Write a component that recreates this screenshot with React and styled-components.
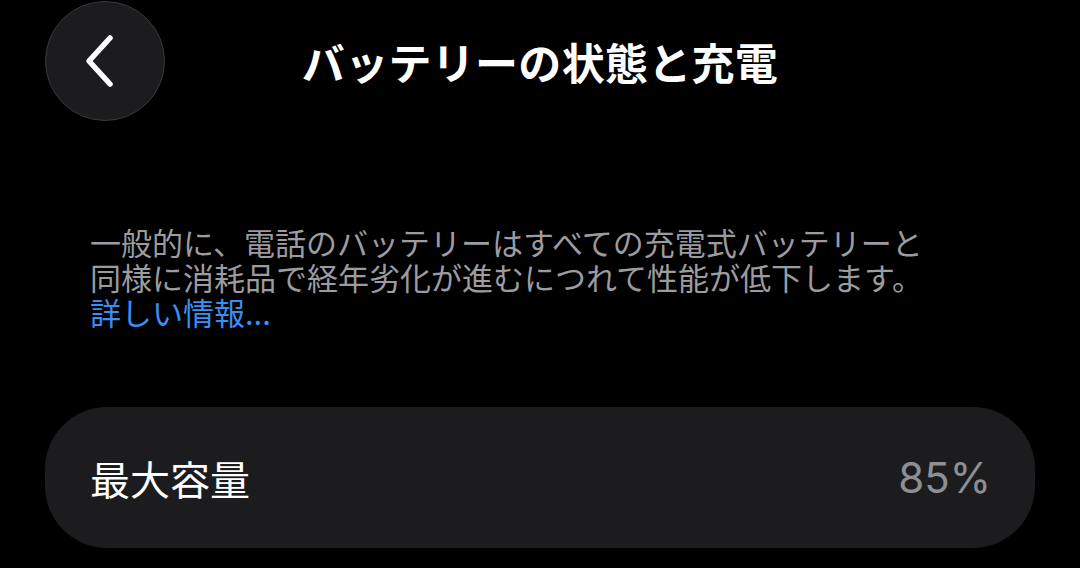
import React from 'react';
import styled, { createGlobalStyle } from 'styled-components';

const GlobalStyle = createGlobalStyle`
  html, body {
    margin: 0;
    padding: 0;
    background: #000;
  }
  body {
    font-family: "Noto Sans CJK JP", "Noto Sans", sans-serif;
    color: #fff;
  }
`;

const Page = styled.div`
  width: 1080px;
  height: 568px;
  background: #000;
  overflow: hidden;
`;

const Header = styled.header`
  display: grid;
  grid-template-columns: 1fr auto 1fr;
  align-items: center;
  padding: 1px 45px 0;
  height: 120px;
`;

const BackButton = styled.button`
  width: 120px;
  height: 120px;
  border-radius: 50%;
  background: #1c1c1e;
  border: 1.5px solid #38383a;
  display: flex;
  align-items: center;
  justify-content: center;
  padding: 0;
  cursor: pointer;
`;

const Title = styled.h1`
  margin: 0;
  font-size: 43px;
  font-weight: 700;
  letter-spacing: 0.3px;
  color: #fff;
`;

const Description = styled.p`
  margin: 103px 0 0;
  padding: 0 90px;
  font-size: 31px;
  line-height: 35px;
  color: #9b9ba0;
`;

const Link = styled.a`
  display: block;
  color: #3a8ff5;
  text-decoration: none;
`;

const Card = styled.div`
  margin: 78px 0 0 45px;
  width: 990px;
  height: 141px;
  box-sizing: border-box;
  border-radius: 62px;
  background: #1c1c1e;
  display: flex;
  align-items: center;
  justify-content: space-between;
  padding: 0 44px 0 45px;
`;

const Label = styled.span`
  font-size: 40px;
  color: #fff;
`;

const Value = styled.span`
  font-family: "Inter", "Noto Sans", sans-serif;
  font-size: 42px;
  color: #8e8e93;
`;

const Chevron = () => (
  <svg width="40" height="60" viewBox="0 0 40 60" style={{ marginLeft: -6 }}>
    <path d="M28 7 L7 30 L28 53" fill="none" stroke="#fff" strokeWidth="5.5" strokeLinecap="round" strokeLinejoin="round" />
  </svg>
);

export default function App() {
  return (
    <Page>
      <GlobalStyle />
      <Header>
        <div>
          <BackButton aria-label="戻る">
            <Chevron />
          </BackButton>
        </div>
        <Title>バッテリーの状態と充電</Title>
        <div />
      </Header>
      <Description>
        一般的に、電話のバッテリーはすべての充電式バッテリーと<br />
        同様に消耗品で経年劣化が進むにつれて性能が低下します。
        <Link href="#">詳しい情報...</Link>
      </Description>
      <Card>
        <Label>最大容量</Label>
        <Value>85%</Value>
      </Card>
    </Page>
  );
}
